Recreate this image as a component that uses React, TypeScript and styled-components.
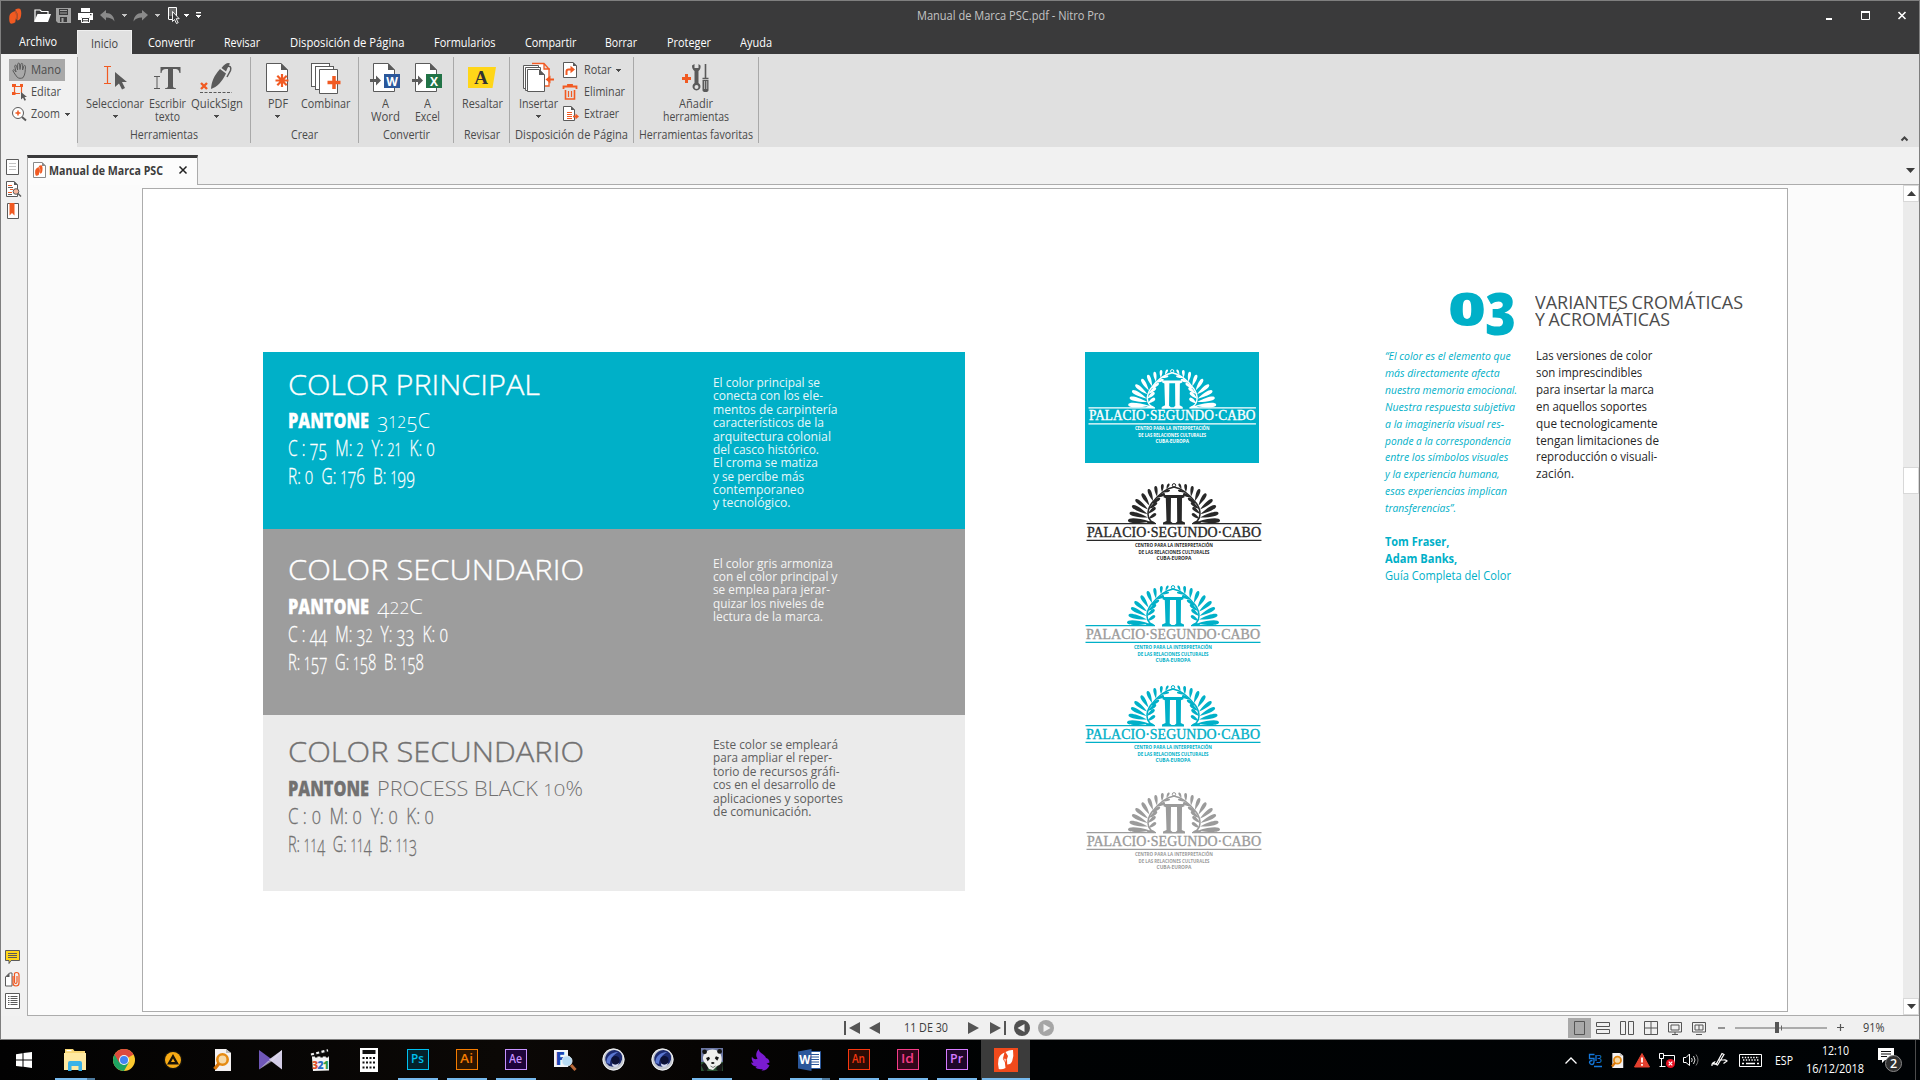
import React, { useLayoutEffect, useRef, useState } from "react";
import styled, { createGlobalStyle, css } from "styled-components";

const CYAN = "#00b0c8";
const INK = "#5a5a5a";
const ORANGE = "#f15a22";
const LINE = "#acacac";

const Global = createGlobalStyle`
  * { box-sizing: border-box; }
  html, body { margin: 0; padding: 0; overflow: hidden; }
  body { font-family: "Open Sans", "Noto Sans", sans-serif; font-size: 12px; color: #444; }
  svg { display: block; flex: none; overflow: visible; }
`;

/* ---------- text fitted to a given measure ---------- */

const FitBox = styled.span<{ $w: number }>`
  display: block;
  flex: none;
  width: ${(p) => p.$w}px;
  white-space: pre;
`;
const FitInner = styled.span`
  display: inline-block;
  transform-origin: 0 50%;
`;

function Fit({ w, children }: { w: number; children: React.ReactNode }) {
  const ref = useRef<HTMLSpanElement>(null);
  const [scale, setScale] = useState(1);
  useLayoutEffect(() => {
    if (ref.current && ref.current.offsetWidth) {
      const natural = ref.current.getBoundingClientRect().width / scale;
      setScale(w / natural);
    }
  }, [w]);
  return (
    <FitBox $w={w}>
      <FitInner ref={ref} style={{ transform: `scaleX(${scale})` }}>
        {children}
      </FitInner>
    </FitBox>
  );
}

const SmallDigit = styled.span<{ $round?: boolean }>`
  display: inline-block;
  font-size: 0.79em;
  line-height: 0;
  transform: scaleX(${(p) => (p.$round ? 1.22 : 1)});
  margin: 0 ${(p) => (p.$round ? 0.07 : 0)}em;
`;
const LowDigit = styled.span`
  vertical-align: -0.19em;
  line-height: 0;
`;

/* Old-style figures: 0 1 2 at x-height, 3 4 5 7 9 descending */
function OldStyle({ text }: { text: string }) {
  return (
    <>
      {text.split("").map((c, i) => {
        if ("012".includes(c)) return <SmallDigit key={i} $round={c === "0"}>{c}</SmallDigit>;
        if ("34579".includes(c)) return <LowDigit key={i}>{c}</LowDigit>;
        return c;
      })}
    </>
  );
}

/* ---------- window frame ---------- */

const Screen = styled.div`
  width: 1920px;
  height: 1080px;
  display: flex;
  flex-direction: column;
  overflow: hidden;
  background: #000;
`;
const Window = styled.div`
  height: 1040px;
  flex: none;
  border: 1px solid #7f7f7f;
  display: flex;
  flex-direction: column;
  background: #f1f1f1;
`;
const Header = styled.header`
  background: #3a3a3b;
  height: 53px;
  flex: none;
`;
const TitleBar = styled.div`
  height: 29px;
  display: grid;
  grid-template-columns: 916px 190px 1fr;
  align-items: center;
`;
const QuickAccess = styled.div`
  display: flex;
  align-items: center;
  padding-left: 8px;
  height: 29px;
`;
const WindowTitle = styled.div`
  color: #c4c4c4;
  font-size: 12px;
`;
const WindowControls = styled.div`
  display: flex;
  justify-content: flex-end;
  align-items: center;
  gap: 28px;
  padding-right: 13px;
`;
const Slot = styled.span<{ $ml?: number }>`
  display: block;
  flex: none;
  margin-left: ${(p) => p.$ml ?? 0}px;
`;
const Menu = styled.nav`
  height: 24px;
  display: flex;
  align-items: flex-start;
  gap: 29.4px;
  color: #fff;
  line-height: 26px;
`;
const FileTab = styled.div`
  width: 76px;
  padding-left: 18px;
  height: 24px;
  line-height: 24px;
  margin-right: -29.4px;
`;
const ActiveTab = styled.div`
  width: 55px;
  height: 24px;
  padding-left: 13px;
  margin-right: -13.4px;
  background: #e0e0e0;
  border: 1px solid #efefef;
  border-bottom: 0;
  line-height: 25px;
  color: #444;
`;

/* ---------- ribbon ---------- */

const Ribbon = styled.div`
  height: 93px;
  flex: none;
  display: flex;
  background: #e0e0e0;
`;
const ToolColumn = styled.div`
  width: 76px;
  background: #f1f1f1;
  padding: 5px 0 0 8px;
`;
const ToolRow = styled.div<{ $on?: boolean }>`
  display: flex;
  align-items: center;
  height: 22px;
  width: 56px;
  padding-left: 3px;
  line-height: 22px;
  color: #4c4c4c;
  background: ${(p) => (p.$on ? "#a9a9a9" : "transparent")};
`;
const ToolIcon = styled.span`
  width: 19px;
  flex: none;
`;
const Group = styled.section<{ $w: number }>`
  width: ${(p) => p.$w}px;
  height: 86px;
  margin-top: 3px;
  border-left: 1px solid #a9a9a9;
  display: flex;
  flex-direction: column;
  color: #4a4a4a;
`;
const GroupBody = styled.div<{ $pl: number }>`
  display: flex;
  flex: none;
  height: 70px;
  padding-left: ${(p) => p.$pl}px;
`;
const GroupLabel = styled.div`
  display: flex;
  justify-content: center;
  line-height: 16px;
`;
const BigButton = styled.div<{ $w: number }>`
  width: ${(p) => p.$w}px;
  display: flex;
  flex-direction: column;
  align-items: center;
  line-height: 13px;
`;
const BigIcon = styled.span`
  height: 36px;
  margin: 3px 0 1px;
  display: flex;
  align-items: center;
`;
const ArrowLine = styled.span`
  padding-top: 5px;
`;
const MiniColumn = styled.div`
  padding-top: 2px;
`;
const MiniRow = styled.div`
  display: flex;
  align-items: center;
  height: 22px;
  line-height: 22px;
`;
const MiniIcon = styled.span`
  width: 21px;
`;
const RibbonEnd = styled.div`
  flex: 1;
  margin-top: 3px;
  height: 86px;
  border-left: 1px solid #a9a9a9;
  display: flex;
  justify-content: flex-end;
  align-items: flex-end;
  padding: 0 11px 2px 0;
`;

/* ---------- document area ---------- */

const Main = styled.div`
  flex: 1;
  display: grid;
  grid-template-columns: 26px 1fr;
  min-height: 0;
`;
const Side = styled.aside`
  display: flex;
  flex-direction: column;
  justify-content: space-between;
  padding: 12px 0 7px;
`;
const SideIcons = styled.div<{ $pl: number }>`
  display: flex;
  flex-direction: column;
  align-items: flex-start;
  gap: 6px;
  padding-left: ${(p) => p.$pl}px;
`;
const Work = styled.div`
  display: flex;
  flex-direction: column;
`;
const TabStrip = styled.div`
  height: 38px;
  flex: none;
  padding-top: 8px;
  display: flex;
  justify-content: space-between;
  align-items: center;
  padding-right: 4px;
  box-shadow: inset 0 -1px ${LINE};
`;
const DocTab = styled.div`
  width: 171px;
  height: 30px;
  display: flex;
  align-items: center;
  padding: 0 0 3px 5px;
  background: #fcfcfc;
  border: 1px solid ${LINE};
  border-top: 3px solid #3a3a3b;
  border-bottom: 0;
  font-weight: 700;
  color: #3c3c3c;
`;
const Viewport = styled.div`
  flex: 1;
  display: flex;
  background: #fbfbfb;
  border-left: 1px solid ${LINE};
  border-bottom: 1px solid ${LINE};
`;
const Page = styled.article`
  width: 1646px;
  height: 824px;
  margin: 3px 0 0 114px;
  background: #fff;
  border: 1px solid ${LINE};
  display: flex;
  align-items: flex-start;
  padding-left: 120px;
`;
const ScrollBar = styled.div`
  width: 16px;
  margin-left: auto;
  background: #ebebeb;
  display: flex;
  flex-direction: column;
`;
const ScrollButton = styled.div<{ $h: number; $mt?: number }>`
  height: ${(p) => p.$h}px;
  margin-top: ${(p) => p.$mt ?? 0}px;
  flex: none;
  background: #fff;
  border: 1px solid #d8d8d8;
  display: flex;
  align-items: center;
  justify-content: center;
`;

/* ---------- page content ---------- */

const Swatches = styled.div`
  width: 702px;
  margin-top: 163px;
`;
const Swatch = styled.div<{ $bg: string; $fg: string; $h: number }>`
  height: ${(p) => p.$h}px;
  background: ${(p) => p.$bg};
  color: ${(p) => p.$fg};
  display: flex;
  padding-left: 25px;
`;
const SwatchInfo = styled.div<{ $pt: number }>`
  width: 424.500px;
  padding-top: ${(p) => p.$pt}px;
`;
const SwatchTitle = styled.h2<{ $mb: number }>`
  margin: 0 0 ${(p) => p.$mb}px;
  font-weight: 300;
  font-size: 28px;
  line-height: 30px;
  -webkit-text-stroke: 0.35px currentColor;
`;
const Pantone = styled.div`
  display: flex;
  gap: 8px;
  font-size: 21px;
  line-height: 28px;
  height: 27px;
  font-weight: 300;
  strong {
    font-weight: 800;
    -webkit-text-stroke: 0.3px currentColor;
  }
`;
const Values = styled.div`
  font-size: 22px;
  line-height: 28px;
  height: 28px;
  font-weight: 300;
  -webkit-text-stroke: 0.3px currentColor;
`;
const SwatchNote = styled.div<{ $pt: number; $fg: string }>`
  padding-top: ${(p) => p.$pt}px;
  font-size: 12.5px;
  line-height: 13.37px;
  color: ${(p) => p.$fg};
`;
const Logos = styled.div`
  width: 178px;
  margin: 163px 0 0 120px;
`;
const LogoCard = styled.div`
  width: 174px;
  height: 111px;
  background: ${CYAN};
  padding: 17px 0 0 3px;
`;
const LogoRow = styled.div<{ $mt: number; $ml?: number }>`
  height: 80px;
  margin-top: ${(p) => p.$mt}px;
  margin-left: ${(p) => p.$ml ?? 0}px;
`;
const Chapter = styled.div`
  margin: 100px 0 0 122px;
  width: 370px;
`;
const ChapterHead = styled.div`
  display: flex;
  height: 59px;
  padding-left: 63px;
`;
const ChapterNumber = styled.div`
  display: flex;
  width: 86.5px;
  color: ${CYAN};
  font-weight: 800;
`;
const Zero = styled.span`
  font-size: 46px;
  line-height: 46px;
  margin-top: -4px;
  width: 37px;
`;
const Three = styled.span`
  font-size: 57.5px;
  line-height: 58px;
  margin-top: -5px;
`;
const ChapterTitle = styled.h1`
  margin: 5px 0 0;
  font-size: 17.5px;
  line-height: 16.8px;
  font-weight: 400;
  color: #4c4c4c;
  word-spacing: -1px;
`;
const ChapterColumns = styled.div`
  display: grid;
  grid-template-columns: 150.5px 1fr;
`;
const column = css`
  line-height: 16.9px;
`;
const Quote = styled.div`
  ${column}
  font-size: 11.5px;
  color: ${CYAN};
`;
const QuoteText = styled.div`
  font-style: italic;
  font-weight: 500;
`;
const QuoteSource = styled.div`
  margin-top: 16.4px;
  font-size: 11.8px;
  strong { font-weight: 700; }
`;
const Body = styled.div`
  ${column}
  font-size: 12.6px;
  color: #262626;
`;

/* ---------- status bar ---------- */

const StatusBar = styled.footer`
  height: 23px;
  flex: none;
  background: #f0f0f0;
  display: flex;
  align-items: center;
  color: #3c3c3c;
`;
const ViewButton = styled.span<{ $on?: boolean }>`
  width: ${(p) => (p.$on ? 23 : 24)}px;
  height: 20px;
  display: flex;
  align-items: center;
  justify-content: center;
  background: ${(p) => (p.$on ? "#a9a9a9" : "transparent")};
`;

/* ---------- taskbar ---------- */

const Taskbar = styled.div`
  height: 40px;
  flex: none;
  display: flex;
  align-items: center;
  background: linear-gradient(90deg, #020202 0, #0b0806 500px, #060403 700px, #000203 1000px, #000305 100%);
  color: #fff;
`;
const StartButton = styled.div`
  width: 50px;
  padding-left: 16px;
`;
const Task = styled.div<{ $active?: boolean }>`
  width: 49px;
  height: 40px;
  padding-top: 2px;
  display: flex;
  flex-direction: column;
  align-items: center;
  justify-content: space-between;
  background: ${(p) => (p.$active ? "#3b3b3b" : "transparent")};
`;
const TaskIcon = styled.div`
  height: 35px;
  display: flex;
  align-items: center;
`;
const Underline = styled.div<{ $w: number; $split?: boolean }>`
  width: ${(p) => p.$w}px;
  height: 2px;
  background: ${(p) => (p.$split ? "linear-gradient(90deg, #76b9ed 32px, #4d7a9e 32px)" : p.$w ? "#76b9ed" : "transparent")};
`;
const AdobeTile = styled.div<{ $fg: string; $bg: string }>`
  width: 22px;
  height: 21px;
  border: 1px solid ${(p) => p.$fg};
  background: ${(p) => p.$bg};
  color: ${(p) => p.$fg};
  display: flex;
  justify-content: center;
  font-size: 12.5px;
  line-height: 18px;
  font-weight: 600;
`;
const Tray = styled.div`
  display: flex;
  align-items: center;
  margin-left: 535px;
  height: 40px;
`;
const Clock = styled.div`
  display: flex;
  flex-direction: column;
  align-items: center;
  line-height: 18px;
  width: 58px;
  margin-left: 13px;
`;
const DesktopEdge = styled.div`
  margin-left: auto;
  margin-right: 4px;
  width: 1px;
  height: 40px;
  background: #4c4c4c;
`;

/* ---------- icons ---------- */

const Caret = ({ c = "#4a4a4a" }: { c?: string }) => (
  <svg width="5" height="3"><path d="M0 0h5v1H4v1H3v1H2V2H1V1H0z" fill={c} /></svg>
);
const Triangle = ({ up, c = "#3c3c3c" }: { up?: boolean; c?: string }) => (
  <svg width="9" height="5"><path d={up ? "M0 5L4.500 0 9 5z" : "M0 0h9L4.500 5z"} fill={c} /></svg>
);

const NitroMark = ({ w = 13, h = 16, c = ORANGE }: { w?: number; h?: number; c?: string }) => (
  <svg width={w} height={h} viewBox="0 0 13 16" preserveAspectRatio="none">
    <path d="M6.200 1.500C8 .5 10.500 0 11.300 1c1.400 2 1.200 6.500.2 9-.6 1.600-1.700 2.200-3.300 2.400L8.600 6z" fill={c} />
    <path d="M5.600 3.200C3 4 .8 5.500.4 8c-.4 3-.2 6 .8 7.200.9 1 3.600.2 5.100-.9l.9-6.600z" fill={c} />
    <path d="M5.600 3.200l-.3 5.500L7.800 12l.8-6-2.400-4z" fill={c} opacity=".75" />
  </svg>
);
const NitroOutline = () => (
  <svg width="16" height="20"><path d="M7.500 2Q12-.5 15 0q1 6-.8 11-1.200 3.500-5 3.500L9 9l1-3z" fill="#fff" /><path d="M6.500 2.500Q1.500 4.500.5 9T.8 19Q4 20 7.500 18L6.800 12l-2-3z" fill="#fff" /><path d="M5 8.500L7.500 12 8.500 9z" fill="#fff" opacity=".6" /></svg>
);

const PageShape = ({ x = 0, y = 0, w = 22, h = 28, c = INK, fold = 7 }: { x?: number; y?: number; w?: number; h?: number; c?: string; fold?: number }) => (
  <g transform={`translate(${x} ${y})`}>
    <path d={`M.5 .5H${w - fold}L${w - 0.5} ${fold}V${h - 0.5}H.5z`} fill="#fff" stroke={c} />
    <path d={`M${w - fold} 0v${fold}h${fold}z`} fill={c} />
  </g>
);

const Pointer = ({ x, y, s = 1, c = INK }: { x: number; y: number; s?: number; c?: string }) => (
  <path transform={`translate(${x} ${y}) scale(${s})`} d="M0 0l12 10H7l3 6-3 1.500-3-6L0 15z" fill={c} />
);

function QuickIcons() {
  return (
    <QuickAccess>
      <NitroMark />
      <Slot $ml={12}>
        <svg width="17" height="13"><path d="M1 12V1h5l1.500 1.500H14V5" fill="none" stroke="#fff" strokeWidth="1.200" /><path d="M3.500 5H17l-3 8H0z" fill="#fff" /></svg>
      </Slot>
      <Slot $ml={5}>
        <svg width="15" height="15"><path d="M0 0h15v15H2L0 13z" fill="#a0a0a0" /><path d="M3 1h9v6H3zM4 9h7v5H4z" fill="#3a3a3b" /><path d="M4 2.500h7M4 5h7" stroke="#a0a0a0" /><path d="M5.500 10h2v4h-2z" fill="#a0a0a0" /></svg>
      </Slot>
      <Slot $ml={7}>
        <svg width="15" height="15"><path d="M3 0h9v4H3zM0 5h15v7h-3V9H3v3H0z" fill="#fff" /><path d="M3.500 9.500h8v5h-8z" fill="#3a3a3b" stroke="#fff" /><path d="M5 11.500h5M5 13.200h5" stroke="#fff" /><path d="M12 6h1.500v1.200H12z" fill="#3a3a3b" /></svg>
      </Slot>
      <Slot $ml={7}>
        <svg width="15" height="12"><path d="M6 0v3c5 0 8 3 8.500 8.500C12.500 8.500 10 7.500 6 7.500v3L0 5z" fill="#8a8a8a" /></svg>
      </Slot>
      <Slot $ml={7}><Caret c="#c4c4c4" /></Slot>
      <Slot $ml={6}>
        <svg width="15" height="12"><path d="M9 0v3C4 3 1 6 .5 11.500 2.500 8.500 5 7.500 9 7.500v3L15 5z" fill="#8a8a8a" /></svg>
      </Slot>
      <Slot $ml={7}><Caret c="#c4c4c4" /></Slot>
      <Slot $ml={7.500}>
        <svg width="12" height="17"><path d="M.5 12.500V.5h8v9" fill="none" stroke="#fff" /><path d="M1 1h7v8H1z" fill="#6b6b6b" /><path d="M1 12.500h3" stroke="#fff" /><path d="M4.500 4.500v10l2-2 2 4 1.700-.8-2-4h3z" fill="#3a3a3b" stroke="#fff" strokeWidth=".9" /></svg>
      </Slot>
      <Slot $ml={4.500}><Caret c="#fff" /></Slot>
      <Slot $ml={7}>
        <svg width="5" height="7"><path d="M0 .7h5" stroke="#fff" strokeWidth="1.400" /><path d="M0 3h5v1H4v1H3v1H2V5H1V4H0z" fill="#fff" /></svg>
      </Slot>
    </QuickAccess>
  );
}

const HandIcon = () => (
  <svg width="16" height="17" viewBox="0 0 16 17"><path d="M5.500 15.500C3.500 13 2 11 .8 8.500 1.500 7.200 3 8 4 10L2.700 4C3 2.800 4.300 3 4.600 4l1 4L5.700 2C6 .8 7.400.8 7.600 2l.4 5.500L8.900 2c.4-1 1.700-.8 1.800.3L10.600 8l1.300-4c.5-1 1.700-.6 1.600.5-.3 3.500 0 8-2.500 11.200-1.800.9-4 .8-5.500-.2z" fill="none" stroke="#5a5a5a" /></svg>
);
const EditIcon = () => (
  <svg width="16" height="16"><path d="M2.500 2.500h7v7M8 9.500H2.500v-7" fill="none" stroke={ORANGE} strokeWidth="1.200" /><path d="M0 0h4v3H0zM8 0h3v3H8zM0 8h3.500v3H0z" fill={ORANGE} /><Pointer x={9} y={8} s={0.5} /></svg>
);
const ZoomIcon = () => (
  <svg width="15" height="15"><circle cx="6" cy="6" r="5.500" fill="#fff" stroke={INK} /><path d="M6 3.500v5M3.500 6h5" stroke={ORANGE} strokeWidth="1.500" /><path d="M10 10l4 3.500" stroke={INK} strokeWidth="2" /></svg>
);
const SelectIcon = () => (
  <svg width="25" height="30"><path d="M1 3.500h7M1 20.500h7M4.500 4v16" stroke={ORANGE} strokeWidth="1.200" fill="none" /><Pointer x={12} y={9} s={1} /></svg>
);
const WriteIcon = () => (
  <svg width="27" height="30"><path d="M0 13.500h6M0 25.500h6M3 14v11" stroke={INK} fill="none" /><path d="M6.500 4h20v6h-1c-.6-3-1.500-4-4.500-4h-2v17c0 1.500.6 2 3 2.200v.8H11v-.8c2.400-.2 3-.7 3-2.200V6h-2C9 6 8 7 7.500 10h-1z" fill={INK} /></svg>
);
const SignIcon = () => (
  <svg width="33" height="32"><path d="M11 27C11.500 20 14 13.500 20 7l6 4.500C22 20 17 25 11 27zM21.500 6C25 1.500 28 0 30 1.500L27.500 6l-1.500 3.500z" fill={INK} /><path d="M27 4.500c3-1 4.500.5 3.500 4L27 15" stroke={INK} strokeWidth="1.500" fill="none" /><path d="M1 21l6 6M7 21l-6 6" stroke={ORANGE} strokeWidth="2.400" /><path d="M0 30.500h32" stroke={INK} strokeDasharray="3 1.500" /></svg>
);
const PdfIcon = () => (
  <svg width="24" height="30"><PageShape h={29} /><path d="M16 11v13M9.500 17.500h13M11.300 12.800l9.400 9.400M20.700 12.800l-9.400 9.400" stroke={ORANGE} strokeWidth="2.200" /></svg>
);
const MergeIcon = () => (
  <svg width="30" height="31"><rect x=".5" y=".5" width="18" height="23" fill="#fff" stroke={INK} /><rect x="4.500" y="3.500" width="18" height="23" fill="#fff" stroke={INK} /><PageShape x={8} y={6} w={19} h={25} fold={0.6} /><path d="M23 13v13M16.500 19.500h13" stroke={ORANGE} strokeWidth="3.500" /></svg>
);
const Letter = styled.text`
  font: 700 12px "Open Sans", sans-serif;
  fill: #fff;
`;
const ExportIcon = ({ c, letter }: { c: string; letter: string }) => (
  <svg width="31" height="30"><PageShape x={3} h={29} /><path d="M0 16.500h6v-3.500l5 5-5 5v-3.500H0z" fill={INK} transform="translate(0 -.5)" /><path d="M14 11h16v14H14z" fill={c} /><Letter x="22" y="22.500" textAnchor="middle">{letter}</Letter></svg>
);
const Serif = styled.text`
  font: 700 19px "Liberation Serif", serif;
  fill: #333;
`;
const HighlightIcon = () => (
  <svg width="28" height="22"><path d="M0 0h28l-3.500 21H0z" fill="#ffd618" /><Serif x="13" y="17" textAnchor="middle">A</Serif></svg>
);
const InsertIcon = () => (
  <svg width="32" height="30"><path d="M9 .5h12L26 6v17h-4M21 0v6h6" fill="#fff" stroke={ORANGE} strokeWidth="1.300" /><path d="M.5 2.500h15v23H.5z" fill="#fff" stroke={INK} /><path d="M2.500 4.500h15v23h-15z" fill="#fff" stroke={INK} /><PageShape x={4} y={6} w={18} h={23} fold={6} /><path d="M31 16.500h-5" stroke={ORANGE} strokeWidth="2" /><path d="M22.500 16.500l5-4v8z" fill={ORANGE} /></svg>
);
const RotateIcon = () => (
  <svg width="15" height="17"><PageShape w={14} h={16} fold={4} /><path d="M3.500 13V9.500q0-2 2-2H8" stroke={ORANGE} strokeWidth="2" fill="none" /><path d="M7.500 3.800l4.500 3.700-4.500 3.700z" fill={ORANGE} /></svg>
);
const TrashIcon = () => (
  <svg width="14" height="15"><path d="M.5 4V1.500h13V4M5 1V0h4v1" fill="none" stroke={ORANGE} strokeWidth="1.800" /><path d="M2.500 5v9h9V5" fill="none" stroke={ORANGE} strokeWidth="1.600" /><path d="M5.500 6v6M8.500 6v6" stroke={ORANGE} strokeWidth="1.200" /></svg>
);
const ExtractIcon = () => (
  <svg width="17" height="16"><PageShape w={12} h={15} fold={4} /><path d="M4 6.500h5M4 8.500h5M4 10.500h5M4 12.500h5" stroke={ORANGE} /><path d="M10 10.500h3" stroke={ORANGE} strokeWidth="1.800" /><path d="M12.500 7.500l3.500 3-3.500 3z" fill={ORANGE} /></svg>
);
const ToolsIcon = () => (
  <svg width="28" height="30"><path d="M0 15.500h9M4.500 11v9" stroke={ORANGE} strokeWidth="3" /><path d="M10 2.500c0 4 2 5 2.500 5.500V20a4 4 0 1 0 4 0V8c.5-.5 2.500-2 2-5.500L16.500 1v4h-4V1zM14.500 22a2 2 0 1 1 0 4 2 2 0 0 1 0-4z" fill={INK} fillRule="evenodd" /><path d="M23.500 1v14M20.500 15.500h6" stroke={INK} strokeWidth="1.600" /><path d="M20.500 17h6v10q0 2-3 2t-3-2z" fill={INK} /><path d="M22.500 18v8M24.700 18v8" stroke="#ccc" strokeWidth=".8" /></svg>
);

/* ---------- brand logo ---------- */

const OUTER: number[][] = [
  [64, 38.500, 42, 37.300, 3.200], [62, 34.500, 43.500, 30, 2.800], [61.500, 31, 46, 22.800, 2.700], [62, 26.500, 49.500, 16.500, 2.600],
  [63.500, 22.500, 56, 10.500, 2.500], [67, 18, 62.500, 6, 2.400], [71, 13.500, 69.500, 3, 2.100], [76, 9, 76.500, 1, 1.900], [80.500, 6, 83, 0.600, 1.600],
];
const INNER: number[][] = [
  [62.500, 36, 70, 30.500, 2.300], [61.800, 31, 69.500, 24.500, 2.200], [63, 26, 71, 19.500, 2.100], [66, 20.500, 74, 15, 2], [71, 14.500, 79, 10.800, 1.900], [76, 9.500, 84, 7.300, 1.500],
];
const leaf = ([bx, by, tx, ty, w]: number[]) => {
  const dx = tx - bx, dy = ty - by, l = Math.hypot(dx, dy), nx = (-dy / l) * w, ny = (dx / l) * w;
  const mx = bx + dx * 0.55, my = by + dy * 0.55;
  return `M${bx} ${by}C${mx + nx} ${my + ny} ${tx + nx} ${ty + ny} ${tx} ${ty}C${tx - nx} ${ty - ny} ${mx - nx} ${my - ny} ${bx} ${by}z`;
};
const LEAVES = [...OUTER, ...INNER].map(leaf).join("");

const Wordmark = styled.text`
  font-family: "Liberation Serif", serif;
  font-size: 14.6px;
  stroke-width: 0.35px;
`;
const Tagline = styled.text`
  font-family: "Open Sans", sans-serif;
  font-weight: 700;
  font-size: 4.8px;
`;

function Wreath({ c }: { c: string }) {
  return (
    <g fill={c}>
      <path d={LEAVES} />
      <path d="M68 40.500C60.500 36 60.500 28 65.500 20.500 72 12 79 5.500 88 4" fill="none" stroke={c} strokeWidth="1.500" />
      <path d="M60 40.500c3-3 6-3 9-1l1 1.500z" />
    </g>
  );
}

function Logo({ mark, word = mark, scale = 1 }: { mark: string; word?: string; scale?: number }) {
  return (
    <svg width={176 * scale} height={80 * scale} viewBox="0 0 176 80">
      <Wreath c={mark} />
      <g transform="translate(176 0) scale(-1 1)"><Wreath c={mark} /></g>
      <circle cx="88" cy="2.300" r="1.700" fill="none" stroke={mark} />
      <path d="M77.500 12h21v2.200l-2.500 1L95.800 38l3.200 1.600V41.500H77V39.600L80.500 38l-.7-22.800-2.300-1zM85 15l-.3 23.500 1.900 1.500h3l1.600-1.500L91 15z" fill={mark} fillRule="evenodd" />
      <path d="M.5 40.700H70M106 40.700h69.500M.5 57.400h175" stroke={mark} strokeWidth="1.200" />
      <Wordmark x="1" y="53.700" textLength="174" lengthAdjust="spacingAndGlyphs" fill={word} stroke={word}>PALACIO·SEGUNDO·CABO</Wordmark>
      <Tagline x="49" y="64" textLength="78" lengthAdjust="spacingAndGlyphs" fill={mark}>CENTRO PARA LA INTERPRETACIÓN</Tagline>
      <Tagline x="52.500" y="70.600" textLength="71" lengthAdjust="spacingAndGlyphs" fill={mark}>DE LAS RELACIONES CULTURALES</Tagline>
      <Tagline x="70.500" y="77.200" textLength="35" lengthAdjust="spacingAndGlyphs" fill={mark}>CUBA·EUROPA</Tagline>
    </svg>
  );
}

/* ---------- data ---------- */

type Line = [string, number];

const SWATCHES: {
  bg: string; fg: string; note: string; h: number; pt: number; mb: number; npt: number;
  title: Line; code: Line; cmyk: Line; rgb: Line; lines: Line[];
}[] = [
  {
    bg: CYAN, fg: "#fff", note: "#e6f7fa", h: 177, pt: 17, mb: 6.5, npt: 24,
    title: ["COLOR PRINCIPAL", 252], code: ["3125C", 53], cmyk: ["C : 75  M: 2  Y: 21  K: 0", 147], rgb: ["R: 0  G: 176  B: 199", 127],
    lines: [["El color principal se", 107], ["conecta con los ele-", 110], ["mentos de carpintería", 124.5], ["característicos de la", 111], ["arquitectura colonial", 118], ["del casco histórico.", 106], ["El croma se matiza", 105], ["y se percibe más", 91], ["contemporaneo", 91], ["y tecnológico.", 77.5]],
  },
  {
    bg: "#9d9d9d", fg: "#fff", note: "#f4f4f4", h: 186, pt: 25, mb: 7.5, npt: 27.5,
    title: ["COLOR SECUNDARIO", 296], code: ["422C", 46], cmyk: ["C : 44  M: 32  Y: 33  K: 0", 160], rgb: ["R: 157  G: 158  B: 158", 136],
    lines: [["El color gris armoniza", 120], ["con el color principal y", 124.5], ["se emplea para jerar-", 117], ["quizar los niveles de", 111], ["lectura de la marca.", 110]],
  },
  {
    bg: "#ebebeb", fg: "#727171", note: "#5e5e5e", h: 176, pt: 21, mb: 7.7, npt: 23,
    title: ["COLOR SECUNDARIO", 296], code: ["PROCESS BLACK 10%", 206], cmyk: ["C : 0  M: 0  Y: 0  K: 0", 146], rgb: ["R: 114  G: 114  B: 113", 129],
    lines: [["Este color se empleará", 125], ["para ampliar el reper-", 119], ["torio de recursos gráfi-", 126.5], ["cos en el desarrollo de", 122.5], ["aplicaciones y soportes", 130], ["de comunicación.", 98.5]],
  },
];

const QUOTE: Line[] = [
  ["“El color es el elemento que", 125.7], ["más directamente afecta", 114.7], ["nuestra memoria emocional.", 132], ["Nuestra respuesta subjetiva", 130], ["a la imaginería visual res-", 119],
  ["ponde a la correspondencia", 125.7], ["entre los símbolos visuales", 123.3], ["y la experiencia humana,", 114.7], ["esas experiencias implican", 122], ["transferencias”.", 71],
];
const BODY: Line[] = [
  ["Las versiones de color", 116.3], ["son imprescindibles", 106.3], ["para insertar la marca", 118], ["en aquellos soportes", 111],
  ["que tecnologicamente", 121.7], ["tengan limitaciones de", 123], ["reproducción o visuali-", 121.3], ["zación.", 38],
];
const MENU: Line[] = [
  ["Convertir", 47], ["Revisar", 36], ["Disposición de Página", 114.5], ["Formularios", 61.5], ["Compartir", 51.5], ["Borrar", 32], ["Proteger", 44], ["Ayuda", 32],
];

const Lines = ({ of }: { of: Line[] }) => <>{of.map(([t, w]) => <Fit key={t} w={w}>{t}</Fit>)}</>;

/* ---------- taskbar icons ---------- */

const Adobe = ({ t, fg, bg }: { t: string; fg: string; bg: string }) => <AdobeTile $fg={fg} $bg={bg}><Fit w={13}>{t}</Fit></AdobeTile>;

const FolderIcon = () => (
  <svg width="22" height="22"><path d="M1 0h8l1.500 2H21v19H1z" fill="#f8d775" /><path d="M0 4h22v17H0z" fill="#ffe9a2" /><path d="M2.500 1h5v1.200h-5z" fill="#fff" /><path d="M4 22v-8q0-2 2-2h10q2 0 2 2v8h-3.500v-5h-7v5z" fill="#3bb2e8" /></svg>
);
const ChromeIcon = () => (
  <svg width="22" height="22" viewBox="-11 -11 22 22"><circle r="11" fill="#fbc92f" /><path d="M0 0L-9.500-5.500A11 11 0 0 1 9.500-5.500z" fill="#dd4b3e" /><path d="M0 0L-9.500-5.500A11 11 0 0 0 0 11L4.800 2.500z" fill="#1da462" /><path d="M-9.500-5.500L-4.500 3l4.500-8z" fill="#dd4b3e" /><circle r="5" fill="#f4f4f4" /><circle r="4" fill="#4285f4" /></svg>
);
const AimpIcon = () => (
  <svg width="20" height="20" viewBox="-10 -10 20 20"><circle r="9.500" fill="#15120b" /><circle r="8" fill="#f8ab14" /><path d="M0-6L6 4.500H-6zM0-1.500L-2 2H2z" fill="#1a1408" fillRule="evenodd" /></svg>
);
const SearchDocIcon = ({ s = 1 }: { s?: number }) => (
  <svg width={18 * s} height={22 * s} viewBox="0 0 18 22"><path d="M2 0h11l5 4v18H2z" fill="#f4f1f1" /><path d="M13 0v4h5z" fill="#bbb" /><circle cx="9.500" cy="10.500" r="5.200" fill="#f6d9a8" stroke="#e58a12" strokeWidth="2.600" /><path d="M6 14.500L1.500 20" stroke="#d9760a" strokeWidth="3.400" /></svg>
);
const KmIcon = () => (
  <svg width="23" height="20"><path d="M0 0l13 9.500L0 19.500z" fill="#6f57b8" /><path d="M23 0L10 9.500l13 10z" fill="#d3cde6" /><path d="M0 19.500l9-8.500 4-1.500L23 0v2L12 12z" fill="#e9e5f3" opacity=".55" /></svg>
);
const Tiny = styled.text`
  font: 800 10.5px "Open Sans", sans-serif;
`;
const MpcIcon = () => (
  <svg width="20" height="22"><path d="M2 8.500h17v13L3 22z" fill="#f5f5f5" /><path d="M0 5L18 0l.8 3L.8 8z" fill="#161616" /><path d="M1 5.500l17-4.200M2 8.500h17" stroke="#f2f2f2" strokeWidth="2.200" strokeDasharray="3 2.400" /><Tiny x="2" y="19.500" fill="#e0522c">3</Tiny><Tiny x="7.500" y="19.500" fill="#2a6cc4">2</Tiny><Tiny x="13" y="19.500" fill="#2f9b46">1</Tiny></svg>
);
const CalcIcon = () => (
  <svg width="18" height="24"><path d="M0 0h18v24H0z" fill="#fff" /><path d="M2.500 2h13v4h-13z" fill="#111" /><path d="M2.500 10h13M2.500 14.500h13M2.500 19.500h13" stroke="#111" strokeWidth="2.200" strokeDasharray="2 1.500" /></svg>
);
const BigF = styled.text`
  font: 800 17px "Open Sans", sans-serif;
  fill: #1b46b4;
`;
const FontSearchIcon = () => (
  <svg width="22" height="22"><path d="M0 1h14v17H0z" fill="#f2f6fb" /><BigF x="1.500" y="16">F</BigF><circle cx="13" cy="12" r="5" fill="#b6dbf4" stroke="#dcebf5" /><path d="M17 16l4.500 5" stroke="#b9693a" strokeWidth="3" /></svg>
);
const CinemaIcon = () => (
  <svg width="23" height="23" viewBox="-11.500 -11.500 23 23"><circle r="11" fill="#c3c7cf" /><circle r="10.500" fill="none" stroke="#f0f1f3" /><ellipse cx=".8" cy="-.8" rx="8.800" ry="8" fill="#1c2a6e" transform="rotate(-35)" /><path d="M-7 3.500C-7.500-2-3-7.500 5-7.500 0-5-3.500-1-3.500 4.500z" fill="#5b78d2" /><circle cx="2" cy=".8" r="4.200" fill="#0c1136" /><path d="M-1.500 4q3.500 2.500 7-.5-1 4-4 4t-3-3.500z" fill="#d5daf0" /></svg>
);
const PandaIcon = () => (
  <svg width="22" height="23"><path d="M0 0h22v23H0z" fill="#6b77a3" /><path d="M0 14h22v9H0z" fill="#2a5233" /><path d="M0 17l4-3 3 6-1 3H3zM22 15l-4 1-3 5 2 2h4z" fill="#151515" /><path d="M2 9Q4 1.500 11.500 1.500T20.500 9 16 18l-4 4-4-1-3-5Q1.500 13 2 9z" fill="#efefed" /><circle cx="3.600" cy="3.800" r="2.400" fill="#151515" /><circle cx="18.600" cy="3.400" r="2.400" fill="#151515" /><path d="M5 10l3-1.300 1 2-2.400 2.500z" fill="#151515" /><path d="M18 9.500l-3-1.200-1.200 2 2.400 2.500z" fill="#151515" /><ellipse cx="11.800" cy="15" rx="1.700" ry="1.100" fill="#151515" /><path d="M9.500 18l2.500 1.500 2.500-1.500" stroke="#777" fill="none" /></svg>
);
const FlameIcon = () => (
  <svg width="20" height="22"><path d="M8 0c-.5 4 5.500 4.500 7 9 2 .3 3.500 2 3.500 4.500l-3 1.200 3 1.500C17 20 14 22 10.500 21.500L12 20c-3 .5-6 0-7.500-1.500l1.500-.8C3 17.500.8 16 0 13.500l2.500.3C.8 12 .3 9.500 1 7.500 2 10 5 11 6.500 9.500 4 6.500 5.500 2 8 0z" fill="#7a1bd1" /></svg>
);
const WordLetter = styled.text`
  font: 700 11.5px "Open Sans", sans-serif;
  fill: #fff;
`;
const WordIcon = () => (
  <svg width="23" height="22"><path d="M12 2.500h10.500v17H12z" fill="#fff" stroke="#2b579a" /><path d="M13 5.500h8M13 8h8M13 10.500h8M13 13h8M13 15.500h8" stroke="#2b579a" strokeWidth="1.200" /><path d="M0 2.500L13.500 0v22L0 19.500z" fill="#2b579a" /><WordLetter x="1.300" y="15.200">W</WordLetter></svg>
);
const NitroTile = styled.div`
  width: 24px;
  height: 24px;
  display: flex;
  align-items: center;
  justify-content: center;
  background: #f04a1c;
`;

const TASKS: { icon: React.ReactNode; line?: number; split?: boolean; active?: boolean }[] = [
  { icon: <FolderIcon />, line: 40, split: true },
  { icon: <ChromeIcon /> },
  { icon: <AimpIcon /> },
  { icon: <SearchDocIcon /> },
  { icon: <KmIcon /> },
  { icon: <MpcIcon /> },
  { icon: <CalcIcon /> },
  { icon: <Adobe t="Ps" fg="#00c0f0" bg="#04222c" />, line: 40 },
  { icon: <Adobe t="Ai" fg="#f57c00" bg="#2c1500" />, line: 40 },
  { icon: <Adobe t="Ae" fg="#c692ff" bg="#1d0439" />, line: 40 },
  { icon: <FontSearchIcon /> },
  { icon: <CinemaIcon /> },
  { icon: <CinemaIcon /> },
  { icon: <PandaIcon />, line: 40 },
  { icon: <FlameIcon /> },
  { icon: <WordIcon />, line: 40, split: true },
  { icon: <Adobe t="An" fg="#f8370f" bg="#2c0c05" />, line: 40 },
  { icon: <Adobe t="Id" fg="#f43c87" bg="#32071c" />, line: 40 },
  { icon: <Adobe t="Pr" fg="#d57bff" bg="#1f0729" />, line: 40 },
  { icon: <NitroTile><NitroOutline /></NitroTile>, line: 48, active: true },
];

const Badge = styled.text`
  font: 600 12.5px "Open Sans", sans-serif;
  fill: #fff;
`;
const Blue = styled.text`
  font: 400 11px "Open Sans", sans-serif;
  fill: #1479dc;
`;

function TrayIcons() {
  return (
    <>
      <svg width="12" height="7"><path d="M.5 6.500L6 1l5.500 5.500" fill="none" stroke="#fff" strokeWidth="1.300" /></svg>
      <Slot $ml={11}>
        <svg width="15" height="15"><path d="M6.500 1.500H1.500v4h4.500v3q0 3-2 3t-2.500-2q0-2 3-2M8 2v6M6 13.500h8" fill="none" stroke="#1479dc" strokeWidth="1.300" /><Blue x="8" y="9.500">3</Blue></svg>
      </Slot>
      <Slot $ml={8}><SearchDocIcon s={0.68} /></Slot>
      <Slot $ml={11}>
        <svg width="16" height="15"><path d="M8 .5L15.500 14H.5z" fill="#e2402e" stroke="#e2402e" strokeLinejoin="round" /><path d="M8 4.500v5M8 11v1.800" stroke="#fff" strokeWidth="1.800" /></svg>
      </Slot>
      <Slot $ml={9}>
        <svg width="17" height="15"><path d="M4 2.500h11.500v8H8M.5.5h4v5h-4zM2.500 6v7M.5 13.500h6" fill="none" stroke="#fff" /><circle cx="11.500" cy="10.500" r="4.500" fill="#e81123" /><path d="M9.700 8.700l3.600 3.600M13.300 8.700l-3.600 3.600" stroke="#fff" strokeWidth="1.200" /></svg>
      </Slot>
      <Slot $ml={7}>
        <svg width="17" height="14"><path d="M.5 4.500h2.500l3.500-3.500v11.500L3 9.500H.5z" fill="none" stroke="#fff" /><path d="M8.500 5q1.500 2 0 4M10.500 3q3 4 0 8" fill="none" stroke="#ddd" /><path d="M13 1.500q4 5.500 0 11" fill="none" stroke="#777" /></svg>
      </Slot>
      <Slot $ml={11}>
        <svg width="17" height="16"><path d="M1 14q-.5-3 2.500-4l-1 2q3 .5 4-2M5 12.500L11 1.500l2 1L6.500 13zM8 8h4.500q2-.5 3.500 1l-3.500 2.500" fill="none" stroke="#fff" strokeWidth="1.200" /></svg>
      </Slot>
      <Slot $ml={11}>
        <svg width="23" height="13"><path d="M.5.500h22v12H.5z" fill="none" stroke="#fff" /><path d="M3 3.500h17M4 6h16" stroke="#fff" strokeWidth="1.400" strokeDasharray="1.400 1.400" /><path d="M3 9.500h2M7 9.500h9M18 9.500h2" stroke="#fff" strokeWidth="1.400" /></svg>
      </Slot>
    </>
  );
}

const STATUS_VIEWS = [
  "M1.500 .5h10v13h-10z",
  "M.5 1.500h13v4h-13zM.5 8.500h13v4h-13z",
  "M.5 .5h5v13h-5zM8.500 .5h5v13h-5z",
  "M.5.5h13v13H.5zM7 .5v13M.5 7h13",
  "M.5 1.500h13v9.500H.5zM3 4h8v5H3zM4 13.500h6M7 11v2",
  "M.5 1.500h13v9.500H.5zM3 4h8v5H3zM7 4v5M4 13.500h6",
];

/* ---------- app ---------- */

const Big = ({ w, icon, lines, arrow }: { w: number; icon: React.ReactNode; lines: Line[]; arrow?: boolean }) => (
  <BigButton $w={w}>
    <BigIcon>{icon}</BigIcon>
    <Lines of={lines} />
    {arrow && <ArrowLine><Caret /></ArrowLine>}
  </BigButton>
);

export default function App() {
  return (
    <Screen>
      <Global />
      <Window>
        <Header>
          <TitleBar>
            <QuickIcons />
            <WindowTitle><Fit w={188}>Manual de Marca PSC.pdf - Nitro Pro</Fit></WindowTitle>
            <WindowControls>
              <svg width="7" height="8"><path d="M0 7h6" stroke="#fff" strokeWidth="2" /></svg>
              <svg width="9" height="9"><path d="M.5 1h8v7.500h-8z" fill="none" stroke="#fff" /><path d="M0 1h9" stroke="#fff" strokeWidth="2" /></svg>
              <svg width="8" height="7"><path d="M.5 0l7 7M7.500 0l-7 7" stroke="#fff" strokeWidth="1.600" /></svg>
            </WindowControls>
          </TitleBar>
          <Menu>
            <FileTab><Fit w={38}>Archivo</Fit></FileTab>
            <ActiveTab><Fit w={27}>Inicio</Fit></ActiveTab>
            {MENU.map(([t, w]) => <Fit key={t} w={w}>{t}</Fit>)}
          </Menu>
        </Header>
        <Ribbon>
          <ToolColumn>
            <ToolRow $on><ToolIcon><HandIcon /></ToolIcon><Fit w={30}>Mano</Fit></ToolRow>
            <ToolRow><ToolIcon><EditIcon /></ToolIcon><Fit w={30}>Editar</Fit></ToolRow>
            <ToolRow><ToolIcon><ZoomIcon /></ToolIcon><Fit w={29}>Zoom</Fit><Slot $ml={5}><Caret /></Slot></ToolRow>
          </ToolColumn>
          <Group $w={173}>
            <GroupBody $pl={7}>
              <Big w={60} icon={<SelectIcon />} lines={[["Seleccionar", 58]]} arrow />
              <Big w={45} icon={<WriteIcon />} lines={[["Escribir", 37], ["texto", 25]]} />
              <Big w={53} icon={<SignIcon />} lines={[["QuickSign", 52]]} arrow />
            </GroupBody>
            <GroupLabel><Fit w={68}>Herramientas</Fit></GroupLabel>
          </Group>
          <Group $w={108}>
            <GroupBody $pl={7}>
              <Big w={39} icon={<PdfIcon />} lines={[["PDF", 20]]} arrow />
              <Big w={58} icon={<MergeIcon />} lines={[["Combinar", 49.5]]} />
            </GroupBody>
            <GroupLabel><Fit w={27}>Crear</Fit></GroupLabel>
          </Group>
          <Group $w={95}>
            <GroupBody $pl={5}>
              <Big w={43} icon={<ExportIcon c="#2b579a" letter="W" />} lines={[["A", 7], ["Word", 29]]} />
              <Big w={41} icon={<ExportIcon c="#217346" letter="X" />} lines={[["A", 7], ["Excel", 25]]} />
            </GroupBody>
            <GroupLabel><Fit w={47}>Convertir</Fit></GroupLabel>
          </Group>
          <Group $w={56}>
            <GroupBody $pl={1}>
              <Big w={56} icon={<HighlightIcon />} lines={[["Resaltar", 41]]} />
            </GroupBody>
            <GroupLabel><Fit w={36}>Revisar</Fit></GroupLabel>
          </Group>
          <Group $w={124}>
            <GroupBody $pl={4}>
              <Big w={49} icon={<InsertIcon />} lines={[["Insertar", 39]]} arrow />
              <MiniColumn>
                <MiniRow><MiniIcon><RotateIcon /></MiniIcon><Fit w={27.5}>Rotar</Fit><Slot $ml={4}><Caret /></Slot></MiniRow>
                <MiniRow><MiniIcon><TrashIcon /></MiniIcon><Fit w={41}>Eliminar</Fit></MiniRow>
                <MiniRow><MiniIcon><ExtractIcon /></MiniIcon><Fit w={35}>Extraer</Fit></MiniRow>
              </MiniColumn>
            </GroupBody>
            <GroupLabel><Fit w={113}>Disposición de Página</Fit></GroupLabel>
          </Group>
          <Group $w={125}>
            <GroupBody $pl={0}>
              <Big w={125} icon={<ToolsIcon />} lines={[["Añadir", 34], ["herramientas", 66]]} />
            </GroupBody>
            <GroupLabel><Fit w={114}>Herramientas favoritas</Fit></GroupLabel>
          </Group>
          <RibbonEnd>
            <svg width="7" height="5"><path d="M.5 4.500l3-3 3 3" fill="none" stroke="#444" strokeWidth="2" /></svg>
          </RibbonEnd>
        </Ribbon>
        <Main>
          <Side>
            <SideIcons $pl={5}>
              <svg width="13" height="16"><path d="M.5.500h12v15H.5z" fill="#fff" stroke={INK} /><path d="M3 4.500h7M3 7.500h7M3 10.500h7" stroke="#c4c4c4" /></svg>
              <svg width="15" height="16"><PageShape w={12} h={16} fold={4} /><path d="M2 4.500h4M4 8.500h3M2 11.500h4" stroke={ORANGE} /><path d="M2 6.500h5M2 13.500h4" stroke={INK} /><circle cx="10" cy="10.500" r="2.800" fill="#f6b79d" stroke={INK} /><path d="M12 12.500l3 3" stroke={INK} strokeWidth="1.400" /></svg>
              <svg width="14" height="16"><path d="M1.500.5h11v15h-11z" fill="#fff" stroke={INK} /><path d="M3.500 0h5v12.500L6 10l-2.500 2.500z" fill={ORANGE} /></svg>
            </SideIcons>
            <SideIcons $pl={4}>
              <svg width="15" height="16"><path d="M.5.500h14v10H6L4 13.500v-3H.5z" fill="#ffd618" stroke={INK} /><path d="M3 3.500h9M3 5.500h9M3 7.500h9" stroke={INK} /></svg>
              <svg width="15" height="15"><path d="M4.500 1H7v13H.5V5z" fill="#fff" stroke={INK} /><path d="M.5 5h4V1z" fill={INK} /><path d="M8 4v7q0 3 3 3t3-3V3q0-2.500-2.500-2.500T9.500 3v7q0 1.500 1.200 1.500T12 10V4" fill="none" stroke={ORANGE} strokeWidth="1.200" /></svg>
              <svg width="15" height="16"><path d="M.5.500h14v15H.5z" fill="#fff" stroke={INK} /><path d="M3 3.500h1.500M5.500 3.500h7M3 5.500h1.500M5.500 5.500h7M3 7.500h1.500M5.500 7.500h7M3 9.500h1.500M5.500 9.500h7M3 11.500h1.500M5.500 11.500h7" stroke={INK} /></svg>
            </SideIcons>
          </Side>
          <Work>
            <TabStrip>
              <DocTab>
                <svg width="13" height="16"><PageShape w={13} h={16} fold={4} c="#8a8a8a" /><g transform="translate(2 3)"><NitroMark w={8} h={11} /></g></svg>
                <Slot $ml={3}><Fit w={114}>Manual de Marca PSC</Fit></Slot>
                <Slot $ml={16}><svg width="8" height="8"><path d="M.5.500l7 7M7.500.5l-7 7" stroke="#222" strokeWidth="1.500" /></svg></Slot>
              </DocTab>
              <Triangle />
            </TabStrip>
            <Viewport>
              <Page>
                <Swatches>
                  {SWATCHES.map((s) => (
                    <Swatch key={s.rgb[0]} $bg={s.bg} $fg={s.fg} $h={s.h}>
                      <SwatchInfo $pt={s.pt}>
                        <SwatchTitle $mb={s.mb}><Fit w={s.title[1]}>{s.title[0]}</Fit></SwatchTitle>
                        <Pantone>
                          <strong><Fit w={81}>PANTONE</Fit></strong>
                          <Fit w={s.code[1]}><OldStyle text={s.code[0]} /></Fit>
                        </Pantone>
                        <Values><Fit w={s.cmyk[1]}><OldStyle text={s.cmyk[0]} /></Fit></Values>
                        <Values><Fit w={s.rgb[1]}><OldStyle text={s.rgb[0]} /></Fit></Values>
                      </SwatchInfo>
                      <SwatchNote $pt={s.npt} $fg={s.note}><Lines of={s.lines} /></SwatchNote>
                    </Swatch>
                  ))}
                </Swatches>
                <Logos>
                  <LogoCard><Logo mark="#fff" scale={0.957} /></LogoCard>
                  <LogoRow $mt={19.600} $ml={1}><Logo mark="#282828" /></LogoRow>
                  <LogoRow $mt={22.400}><Logo mark={CYAN} word="#9b9b9b" /></LogoRow>
                  <LogoRow $mt={20.400}><Logo mark={CYAN} /></LogoRow>
                  <LogoRow $mt={26.200} $ml={1}><Logo mark="#9b9b9b" /></LogoRow>
                </Logos>
                <Chapter>
                  <ChapterHead>
                    <ChapterNumber>
                      <Zero><Fit w={38}>0</Fit></Zero>
                      <Three><Fit w={31}>3</Fit></Three>
                    </ChapterNumber>
                    <ChapterTitle>
                      <Fit w={208}>VARIANTES CROMÁTICAS</Fit>
                      <Fit w={135}>Y ACROMÁTICAS</Fit>
                    </ChapterTitle>
                  </ChapterHead>
                  <ChapterColumns>
                    <Quote>
                      <QuoteText><Lines of={QUOTE} /></QuoteText>
                      <QuoteSource>
                        <strong><Fit w={64.300}>Tom Fraser,</Fit></strong>
                        <strong><Fit w={72.300}>Adam Banks,</Fit></strong>
                        <Fit w={126}>Guía Completa del Color</Fit>
                      </QuoteSource>
                    </Quote>
                    <Body><Lines of={BODY} /></Body>
                  </ChapterColumns>
                </Chapter>
              </Page>
              <ScrollBar>
                <ScrollButton $h={17}><Triangle up /></ScrollButton>
                <ScrollButton $h={27} $mt={265} />
                <ScrollButton $h={17} $mt={504}><Triangle /></ScrollButton>
              </ScrollBar>
            </Viewport>
          </Work>
        </Main>
        <StatusBar>
          <Slot $ml={843}><svg width="16" height="14"><path d="M1 0v14" stroke="#555" strokeWidth="2" /><path d="M16 1v12L5 7z" fill="#555" /></svg></Slot>
          <Slot $ml={9}><svg width="11" height="12"><path d="M11 0v12L0 6z" fill="#555" /></svg></Slot>
          <Slot $ml={24}><Fit w={44}>11 DE 30</Fit></Slot>
          <Slot $ml={20}><svg width="11" height="12"><path d="M0 0v12l11-6z" fill="#555" /></svg></Slot>
          <Slot $ml={11}><svg width="16" height="14"><path d="M15 0v14" stroke="#555" strokeWidth="2" /><path d="M0 1v12l11-6z" fill="#555" /></svg></Slot>
          <Slot $ml={8}><svg width="16" height="16"><circle cx="8" cy="8" r="8" fill="#505050" /><path d="M10.500 4v8L3.500 8z" fill="#f0f0f0" /></svg></Slot>
          <Slot $ml={8}><svg width="16" height="16"><circle cx="8" cy="8" r="8" fill="#a5a5a5" /><path d="M5.500 4v8l7-4z" fill="#f0f0f0" /></svg></Slot>
          <Slot $ml={514} />
          {STATUS_VIEWS.map((d, i) => (
            <ViewButton key={d} $on={i === 0}><svg width="14" height="14"><path d={d} fill="none" stroke="#555" /></svg></ViewButton>
          ))}
          <Slot $ml={7}><svg width="7" height="2"><path d="M0 1h7" stroke="#555" strokeWidth="1.200" /></svg></Slot>
          <Slot $ml={10}><svg width="92" height="12"><path d="M0 6h92M46.500 3.500v5" stroke="#666" /><path d="M40 0h4v11h-4z" fill="#555" /></svg></Slot>
          <Slot $ml={10}><svg width="7" height="7"><path d="M0 3.500h7M3.500 0v7" stroke="#555" strokeWidth="1.200" /></svg></Slot>
          <Slot $ml={19}><Fit w={21.500}>91%</Fit></Slot>
        </StatusBar>
      </Window>
      <Taskbar>
        <StartButton>
          <svg width="16" height="16"><path d="M0 2.200L6.500 1.300V7.500H0zM7.500 1.100L16 0v7.500H7.500zM0 8.500h6.500v6.300L0 13.900zM7.500 8.500H16V16l-8.500-1.200z" fill="#fff" /></svg>
        </StartButton>
        {TASKS.map((t, i) => (
          <Task key={i} $active={t.active}>
            <TaskIcon>{t.icon}</TaskIcon>
            <Underline $w={t.line ?? 0} $split={t.split} />
          </Task>
        ))}
        <Tray>
          <TrayIcons />
          <Slot $ml={13}><Fit w={18}>ESP</Fit></Slot>
          <Clock>
            <Fit w={27}>12:10</Fit>
            <Fit w={58}>16/12/2018</Fit>
          </Clock>
          <Slot $ml={14}>
            <svg width="24" height="24"><path d="M0 0h16v12H7l-3 3v-3H0z" fill="#fff" /><path d="M3 3.500h10M3 6h10M3 8.500h6" stroke="#111" strokeWidth="1.200" /><circle cx="15.500" cy="15.500" r="8" fill="#303030" stroke="#8a8a8a" /><Badge x="15.500" y="20" textAnchor="middle">2</Badge></svg>
          </Slot>
        </Tray>
        <DesktopEdge />
      </Taskbar>
    </Screen>
  );
}
